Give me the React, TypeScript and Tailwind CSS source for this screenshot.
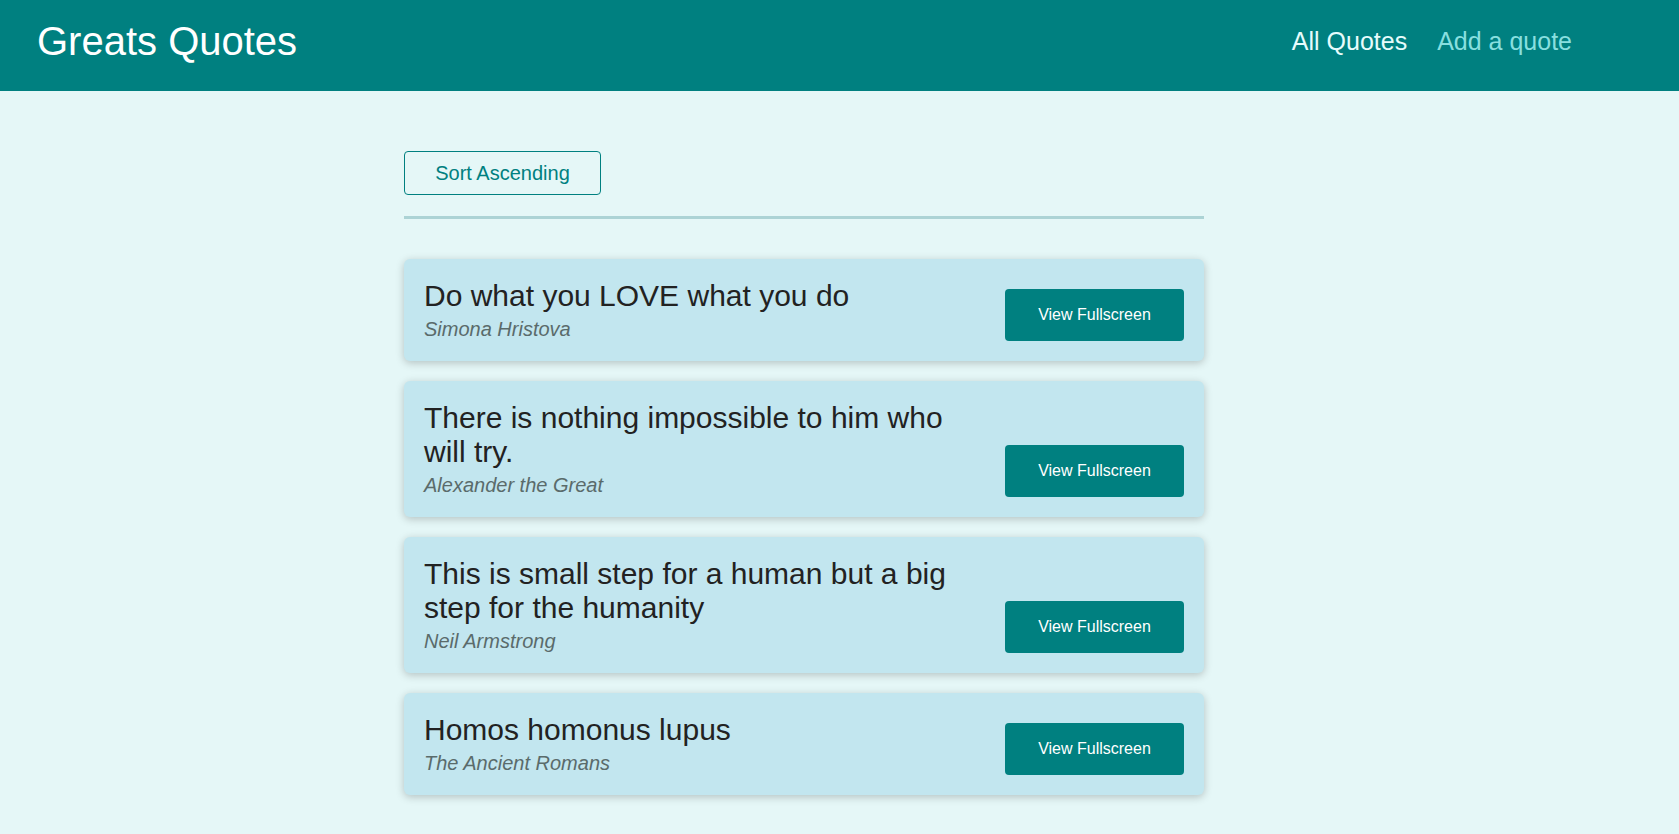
import React from "react";

const quotes = [
  { text: "Do what you LOVE what you do", author: "Simona Hristova" },
  { text: "There is nothing impossible to him who will try.", author: "Alexander the Great" },
  { text: "This is small step for a human but a big step for the humanity", author: "Neil Armstrong" },
  { text: "Homos homonus lupus", author: "The Ancient Romans" },
];

export default function App() {
  return (
    <div className="min-h-[834px] bg-[#e5f7f7] font-['Liberation_Sans',Arial,sans-serif]">
      <header className="h-[91px] bg-[#008080] flex items-center justify-between pl-[37px] pr-[107px] pb-[8px]">
        <h1 className="text-[40px] leading-[normal] text-white">Greats Quotes</h1>
        <nav className="flex items-center gap-[30px] text-[25px] leading-[normal]">
          <a className="text-[#e6fcfc]">All Quotes</a>
          <a className="text-[#88dfdf]">Add a quote</a>
        </nav>
      </header>
      <main className="ml-[404px] w-[800px] pt-[60px] pb-[38px]">
        <button className="w-[197px] h-[44px] border border-[#008080] rounded-[4px] text-[#008080] text-[20px] leading-[normal] bg-transparent">
          Sort Ascending
        </button>
        <div className="mt-[21px] h-[3px] bg-[#acd3d5]" />
        <ul className="mt-[40px] flex flex-col gap-[20px]">
          {quotes.map((q) => (
            <li
              key={q.author}
              className="bg-[#c2e6ef] rounded-[6px] shadow-[0_2px_8px_rgba(0,0,0,0.22)] p-[20px] flex items-end"
            >
              <div className="flex-1 mr-[40px]">
                <p className="text-[30px] leading-[normal] text-[#222222]">{q.text}</p>
                <p className="mt-[5px] text-[20px] leading-[normal] italic text-[#5a6b6b]">{q.author}</p>
              </div>
              <button className="w-[179px] h-[52px] bg-[#008080] text-white text-[16px] leading-[normal] rounded-[4px] shrink-0">
                View Fullscreen
              </button>
            </li>
          ))}
        </ul>
      </main>
    </div>
  );
}
